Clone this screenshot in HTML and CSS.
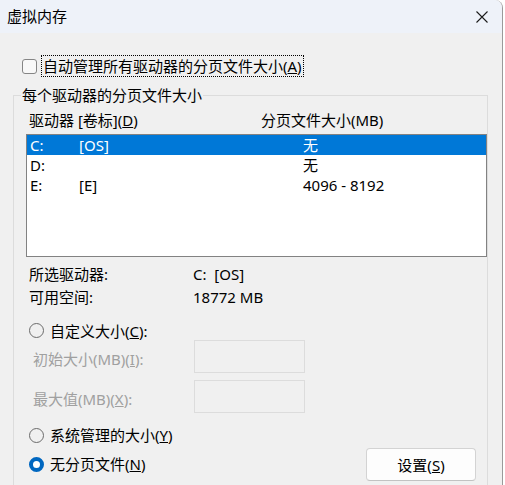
FILE: index.html
```html
<!DOCTYPE html>
<html lang="zh-CN">
<head>
<meta charset="utf-8">
<title>虚拟内存</title>
<link rel="stylesheet" href="styles.css">
</head>
<body>
<div class="window">
  <div class="titlebar">
    <span class="title">虚拟内存</span>
    <svg class="close" viewBox="0 0 12 12" width="12" height="12"><path d="M0.5 0.5 L11.5 11.5 M11.5 0.5 L0.5 11.5" stroke="#1b1b1b" stroke-width="1.1" fill="none"/></svg>
  </div>
  <div class="content">
    <div class="auto-row">
      <span class="checkbox"></span>
      <span class="focus">自动管理所有驱动器的分页文件大小(<u>A</u>)</span>
    </div>
    <fieldset class="group">
      <legend>每个驱动器的分页文件大小</legend>
      <div class="list-header">
        <span class="col-drive">驱动器 [卷标](<u>D</u>)</span>
        <span>分页文件大小(MB)</span>
      </div>
      <div class="listbox">
        <div class="row selected"><span class="c1">C:</span><span class="c2">[OS]</span><span>无</span></div>
        <div class="row"><span class="c1">D:</span><span class="c2"></span><span>无</span></div>
        <div class="row"><span class="c1">E:</span><span class="c2">[E]</span><span>4096 - 8192</span></div>
      </div>
      <div class="info">
        <span>所选驱动器:</span><span class="pre">C:  [OS]</span>
        <span>可用空间:</span><span>18772 MB</span>
      </div>
      <div class="radio-row custom"><span class="radio"></span><span>自定义大小(<u>C</u>):</span></div>
      <div class="field-row">
        <span class="field-label">初始大小(MB)(<u>I</u>):</span>
        <span class="textbox"></span>
      </div>
      <div class="field-row second">
        <span class="field-label">最大值(MB)(<u>X</u>):</span>
        <span class="textbox"></span>
      </div>
      <div class="bottom">
        <div class="radios">
          <div class="radio-row"><span class="radio"></span><span>系统管理的大小(<u>Y</u>)</span></div>
          <div class="radio-row"><span class="radio checked"></span><span>无分页文件(<u>N</u>)</span></div>
        </div>
        <div class="button">设置(<u>S</u>)</div>
      </div>
    </fieldset>
  </div>
</div>
</body>
</html>
```
FILE: styles.css
```css
* { box-sizing: border-box; }

body {
  margin: 0;
  background: #ffffff;
  font-family: "Noto Sans", "Noto Sans CJK SC", sans-serif;
  font-size: 15px;
  color: #000;
}

.window {
  width: 503px;
  height: 485px;
  overflow: hidden;
  background: #f0f0f0;
  border-right: 1px solid #9a9a9a;
  border-top-right-radius: 8px;
}

.titlebar {
  height: 33px;
  background: #eef2f9;
  display: flex;
  align-items: center;
  padding: 0 14px 2px 7px;
}

.title {
  flex: 1;
  line-height: 20px;
}

.close {
  display: block;
  margin-top: 2px;
}

.auto-row {
  display: flex;
  align-items: center;
  height: 22px;
  margin-top: 22px;
}

.checkbox {
  width: 15px;
  height: 15px;
  margin-left: 22px;
  border: 1px solid #858585;
  border-radius: 3px;
  background: #f8f8f8;
}

.focus {
  margin-left: 4px;
  border: 1px dotted #000;
  padding: 0 1px;
  line-height: 20px;
}

.group {
  margin: 8px 0 0 13px;
  width: 475px;
  min-width: 0;
  height: 430px;
  border: 1px solid #dcdcdc;
  padding: 0;
}

.group legend {
  margin-left: 7px;
  padding: 0 1px;
  line-height: 20px;
}

.list-header {
  display: flex;
  margin-top: 5px;
  padding-left: 15px;
  line-height: 20px;
}

.col-drive { width: 232px; }

.listbox {
  margin: 4px 0 0 12px;
  width: 461px;
  height: 123px;
  border: 1px solid #828282;
  background: #fff;
}

.row {
  display: flex;
  height: 20px;
  line-height: 20px;
  padding-left: 3px;
}

.row.selected {
  background: #0078d7;
  color: #fff;
}

.c1 { width: 49px; }
.c2 { width: 224px; }

.info {
  display: grid;
  grid-template-columns: 164px auto;
  row-gap: 3px;
  margin-top: 7px;
  padding-left: 15px;
  line-height: 20px;
}

.pre { white-space: pre; }

.radio-row {
  display: flex;
  align-items: center;
  height: 20px;
  line-height: 20px;
  padding-left: 15px;
}

.radio-row.custom {
  margin-top: 14px;
  height: 19px;
}

.radio {
  width: 15px;
  height: 15px;
  border-radius: 50%;
  border: 1px solid #6b6b6b;
  margin-right: 6px;
  flex: none;
}

.radio.checked {
  border: 4px solid #0067c0;
  background: #fff;
}

.field-row {
  display: flex;
  align-items: center;
  height: 33px;
  padding-left: 19px;
}

.field-row.second { margin-top: 7px; }

.field-label {
  width: 161px;
  color: #a0a0a0;
  line-height: 20px;
  padding-top: 4px;
}

.textbox {
  width: 111px;
  height: 33px;
  border: 1px solid #dcdcdc;
  background: #f0f0f0;
}

.bottom {
  display: flex;
  align-items: flex-start;
  margin-top: 12px;
}

.radios {
  display: flex;
  flex-direction: column;
  gap: 9px;
}

.button {
  margin: 23px 11px 0 auto;
  width: 110px;
  height: 33px;
  border: 1px solid #d3d3d3;
  border-bottom-color: #c2c2c2;
  border-radius: 4px;
  background: #fdfdfd;
  display: flex;
  align-items: center;
  justify-content: center;
  line-height: 20px;
}
```
